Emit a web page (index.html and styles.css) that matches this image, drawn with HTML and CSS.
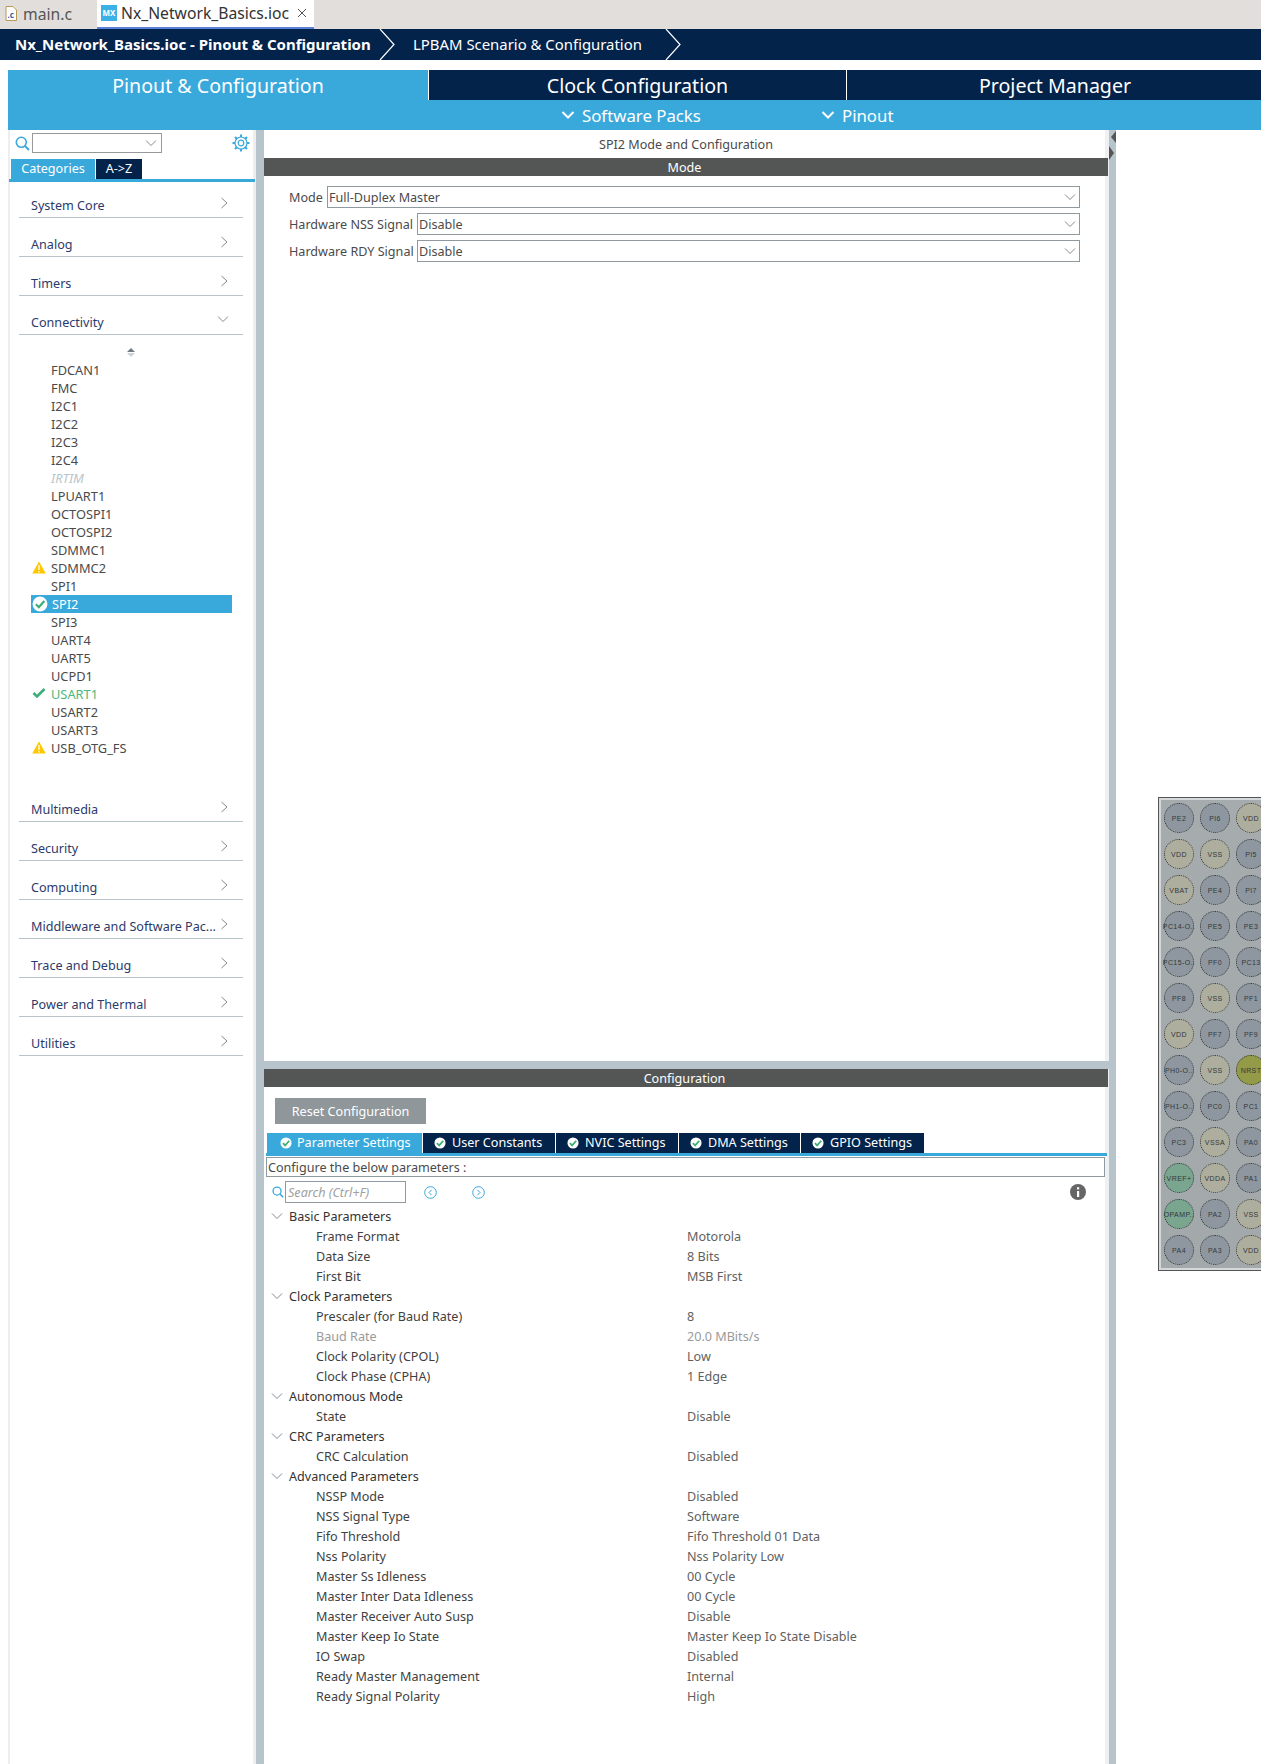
FILE: index.html
```html
<!DOCTYPE html>
<html lang="en">
<head>
    <meta charset="UTF-8">
    <title>Nx_Network_Basics.ioc - Pinout &amp; Configuration</title>
    <link rel="stylesheet" href="styles.css">
</head>
<body>
    <svg class="defs" width="0" height="0">
        <symbol id="chev-right" viewBox="0 0 8 12"><path d="M1.5 1 L7 6 L1.5 11" fill="none" stroke="#7f8a90" stroke-width="1"/></symbol>
        <symbol id="chev-down" viewBox="0 0 12 8"><path d="M1 1.5 L6 6.5 L11 1.5" fill="none" stroke="#7f8a90" stroke-width="1"/></symbol>
        <symbol id="chev-white" viewBox="0 0 14 10"><path d="M1.5 2 L7 7.5 L12.5 2" fill="none" stroke="#fff" stroke-width="2"/></symbol>
        <symbol id="search" viewBox="0 0 15 15"><circle cx="6.3" cy="6.3" r="5" fill="none" stroke="#39a9dc" stroke-width="1.6"/><path d="M10 10 L14 14" stroke="#39a9dc" stroke-width="2"/></symbol>
        <symbol id="tick" viewBox="0 0 14 14"><circle cx="7" cy="7" r="6.5" fill="#fff"/><path d="M3.4 7.2 L6 9.8 L10.8 4.4" fill="none" stroke="#3cae76" stroke-width="2"/></symbol>
        <symbol id="warn" viewBox="0 0 14 13"><path d="M7 0.5 L13.8 12.5 L0.2 12.5 Z" fill="#fdc800"/><path d="M7 4 V9 M7 10 V11.5" stroke="#fff" stroke-width="1.3"/></symbol>
    </svg>

    <div class="file-tabs">
        <div class="file-tab">
            <svg class="file-icon" width="12" height="15" viewBox="0 0 12 15"><path d="M1 .5 H8 L11.5 4 V14.5 H1 Z" fill="#fff" stroke="#b59a5a"/><text x="2.5" y="12" class="file-c">.c</text></svg>
            <span>main.c</span>
        </div>
        <div class="file-tab active">
            <span class="mx-icon">MX</span>
            <span>Nx_Network_Basics.ioc</span>
            <svg class="close-x" width="10" height="10" viewBox="0 0 10 10"><path d="M1 1 L9 9 M9 1 L1 9" stroke="#555" stroke-width="1"/></svg>
        </div>
    </div>

    <div class="crumbs">
        <span class="crumb-on">Nx_Network_Basics.ioc - Pinout &amp; Configuration</span>
        <svg class="crumb-arrow" width="17" height="31" viewBox="0 0 17 31"><path d="M1 0 L15 15.5 L1 31" fill="none" stroke="#fff" stroke-width="1.2"/></svg>
        <span class="crumb-off">LPBAM Scenario &amp; Configuration</span>
        <svg class="crumb-arrow" width="17" height="31" viewBox="0 0 17 31"><path d="M1 0 L15 15.5 L1 31" fill="none" stroke="#fff" stroke-width="1.2"/></svg>
    </div>

    <div class="main-tabs">
        <div class="main-tab active">Pinout &amp; Configuration</div>
        <div class="main-tab second">Clock Configuration</div>
        <div class="main-tab third">Project Manager</div>
    </div>
    <div class="sub-bar">
        <svg class="sub-chev" width="14" height="10"><use href="#chev-white"/></svg>
        <span class="sub-packs">Software Packs</span>
        <svg class="sub-chev" width="14" height="10"><use href="#chev-white"/></svg>
        <span>Pinout</span>
    </div>

    <div class="workspace">
        <aside class="side">
            <div class="side-search">
                <svg class="search-big" width="15" height="15"><use href="#search"/></svg>
                <div class="combo"><svg width="12" height="8"><use href="#chev-down"/></svg></div>
                <svg class="gear" width="18" height="18" viewBox="0 0 18 18">
                    <circle cx="9" cy="9" r="6" fill="none" stroke="#39a9dc" stroke-width="1.2"/>
                    <circle cx="9" cy="9" r="2.8" fill="none" stroke="#39a9dc" stroke-width="1.2"/>
                    <path d="M9 .5 V3 M9 15 V17.5 M.5 9 H3 M15 9 H17.5 M3 3 L4.8 4.8 M13.2 13.2 L15 15 M15 3 L13.2 4.8 M4.8 13.2 L3 15" stroke="#39a9dc" stroke-width="2"/>
                </svg>
            </div>
            <div class="side-tabs">
                <span class="side-tab active">Categories</span>
                <span class="side-tab">A-&gt;Z</span>
            </div>
            <div class="side-list">
                <div class="cat"><span>System Core</span><svg width="8" height="12"><use href="#chev-right"/></svg></div>
                <div class="cat"><span>Analog</span><svg width="8" height="12"><use href="#chev-right"/></svg></div>
                <div class="cat"><span>Timers</span><svg width="8" height="12"><use href="#chev-right"/></svg></div>
                <div class="cat open"><span>Connectivity</span><svg width="12" height="8"><use href="#chev-down"/></svg></div>
                <div class="sort"><span class="sort-up"></span><span class="sort-down"></span></div>
                <ul class="periph">
                    <li>FDCAN1</li>
                    <li>FMC</li>
                    <li>I2C1</li>
                    <li>I2C2</li>
                    <li>I2C3</li>
                    <li>I2C4</li>
                    <li class="off">IRTIM</li>
                    <li>LPUART1</li>
                    <li>OCTOSPI1</li>
                    <li>OCTOSPI2</li>
                    <li>SDMMC1</li>
                    <li><svg class="li-icon" width="14" height="13"><use href="#warn"/></svg>SDMMC2</li>
                    <li>SPI1</li>
                    <li class="selected"><svg class="li-icon" width="16" height="16"><use href="#tick"/></svg>SPI2</li>
                    <li>SPI3</li>
                    <li>UART4</li>
                    <li>UART5</li>
                    <li>UCPD1</li>
                    <li class="ok"><svg class="li-icon" width="14" height="12" viewBox="0 0 14 12"><path d="M1.5 6 L5 9.5 L12.5 2" fill="none" stroke="#3cae76" stroke-width="2.6"/></svg>USART1</li>
                    <li>USART2</li>
                    <li>USART3</li>
                    <li><svg class="li-icon" width="14" height="13"><use href="#warn"/></svg>USB_OTG_FS</li>
                </ul>
                <div class="cat"><span>Multimedia</span><svg width="8" height="12"><use href="#chev-right"/></svg></div>
                <div class="cat"><span>Security</span><svg width="8" height="12"><use href="#chev-right"/></svg></div>
                <div class="cat"><span>Computing</span><svg width="8" height="12"><use href="#chev-right"/></svg></div>
                <div class="cat"><span>Middleware and Software Pac...</span><svg width="8" height="12"><use href="#chev-right"/></svg></div>
                <div class="cat"><span>Trace and Debug</span><svg width="8" height="12"><use href="#chev-right"/></svg></div>
                <div class="cat"><span>Power and Thermal</span><svg width="8" height="12"><use href="#chev-right"/></svg></div>
                <div class="cat"><span>Utilities</span><svg width="8" height="12"><use href="#chev-right"/></svg></div>
            </div>
        </aside>

        <div class="split-v"></div>

        <main class="centre">
            <section class="mode">
                <div class="mode-title">SPI2 Mode and Configuration</div>
                <div class="bar">Mode</div>
                <div class="mode-form">
                    <div class="mode-row"><label>Mode</label><div class="select">Full-Duplex Master<svg width="12" height="8"><use href="#chev-down"/></svg></div></div>
                    <div class="mode-row"><label>Hardware NSS Signal</label><div class="select">Disable<svg width="12" height="8"><use href="#chev-down"/></svg></div></div>
                    <div class="mode-row"><label>Hardware RDY Signal</label><div class="select">Disable<svg width="12" height="8"><use href="#chev-down"/></svg></div></div>
                </div>
            </section>

            <div class="split-h"></div>

            <section class="config">
                <div class="bar">Configuration</div>
                <button class="reset">Reset Configuration</button>
                <div class="cfg-tabs">
                    <span class="cfg-tab active t1"><svg width="12" height="12"><use href="#tick"/></svg>Parameter Settings</span>
                    <span class="cfg-tab t2"><svg width="12" height="12"><use href="#tick"/></svg>User Constants</span>
                    <span class="cfg-tab t3"><svg width="12" height="12"><use href="#tick"/></svg>NVIC Settings</span>
                    <span class="cfg-tab t4"><svg width="12" height="12"><use href="#tick"/></svg>DMA Settings</span>
                    <span class="cfg-tab t5"><svg width="12" height="12"><use href="#tick"/></svg>GPIO Settings</span>
                </div>
                <div class="cfg-note">Configure the below parameters :</div>
                <div class="cfg-search">
                    <svg class="search-small" width="12" height="12"><use href="#search"/></svg>
                    <div class="search-box">Search (Ctrl+F)</div>
                    <svg class="nav-btn" width="13" height="13" viewBox="0 0 13 13"><circle cx="6.5" cy="6.5" r="5.8" fill="none" stroke="#39a9dc" stroke-width="1"/><path d="M7.6 3.8 L5 6.5 L7.6 9.2" fill="none" stroke="#39a9dc" stroke-width="1"/></svg>
                    <svg class="nav-btn next" width="13" height="13" viewBox="0 0 13 13"><circle cx="6.5" cy="6.5" r="5.8" fill="none" stroke="#39a9dc" stroke-width="1"/><path d="M5.4 3.8 L8 6.5 L5.4 9.2" fill="none" stroke="#39a9dc" stroke-width="1"/></svg>
                    <svg class="info" width="16" height="16" viewBox="0 0 16 16"><circle cx="8" cy="8" r="8" fill="#666"/><rect x="7" y="7" width="2.2" height="6" fill="#fff"/><rect x="7" y="3.2" width="2.2" height="2.2" fill="#fff"/></svg>
                </div>
                <div class="params">
                    <div class="group"><svg width="12" height="8"><use href="#chev-down"/></svg>Basic Parameters</div>
                    <div class="param"><span>Frame Format</span><span>Motorola</span></div>
                    <div class="param"><span>Data Size</span><span>8 Bits</span></div>
                    <div class="param"><span>First Bit</span><span>MSB First</span></div>
                    <div class="group"><svg width="12" height="8"><use href="#chev-down"/></svg>Clock Parameters</div>
                    <div class="param"><span>Prescaler (for Baud Rate)</span><span>8</span></div>
                    <div class="param muted"><span>Baud Rate</span><span>20.0 MBits/s</span></div>
                    <div class="param"><span>Clock Polarity (CPOL)</span><span>Low</span></div>
                    <div class="param"><span>Clock Phase (CPHA)</span><span>1 Edge</span></div>
                    <div class="group"><svg width="12" height="8"><use href="#chev-down"/></svg>Autonomous Mode</div>
                    <div class="param"><span>State</span><span>Disable</span></div>
                    <div class="group"><svg width="12" height="8"><use href="#chev-down"/></svg>CRC Parameters</div>
                    <div class="param"><span>CRC Calculation</span><span>Disabled</span></div>
                    <div class="group"><svg width="12" height="8"><use href="#chev-down"/></svg>Advanced Parameters</div>
                    <div class="param"><span>NSSP Mode</span><span>Disabled</span></div>
                    <div class="param"><span>NSS Signal Type</span><span>Software</span></div>
                    <div class="param"><span>Fifo Threshold</span><span>Fifo Threshold 01 Data</span></div>
                    <div class="param"><span>Nss Polarity</span><span>Nss Polarity Low</span></div>
                    <div class="param"><span>Master Ss Idleness</span><span>00 Cycle</span></div>
                    <div class="param"><span>Master Inter Data Idleness</span><span>00 Cycle</span></div>
                    <div class="param"><span>Master Receiver Auto Susp</span><span>Disable</span></div>
                    <div class="param"><span>Master Keep Io State</span><span>Master Keep Io State Disable</span></div>
                    <div class="param"><span>IO Swap</span><span>Disabled</span></div>
                    <div class="param"><span>Ready Master Management</span><span>Internal</span></div>
                    <div class="param"><span>Ready Signal Polarity</span><span>High</span></div>
                </div>
            </section>
        </main>

        <div class="split-r">
            <span class="arrow-left"></span>
            <span class="arrow-right"></span>
        </div>

        <div class="pinout">
            <div class="chip">
                <span class="pin">PE2</span><span class="pin">PI6</span><span class="pin pwr">VDD</span>
                <span class="pin pwr">VDD</span><span class="pin pwr">VSS</span><span class="pin">PI5</span>
                <span class="pin pwr">VBAT</span><span class="pin">PE4</span><span class="pin">PI7</span>
                <span class="pin">PC14-O..</span><span class="pin">PE5</span><span class="pin">PE3</span>
                <span class="pin">PC15-O..</span><span class="pin">PF0</span><span class="pin">PC13</span>
                <span class="pin">PF8</span><span class="pin pwr">VSS</span><span class="pin">PF1</span>
                <span class="pin pwr">VDD</span><span class="pin">PF7</span><span class="pin">PF9</span>
                <span class="pin">PH0-O..</span><span class="pin pwr">VSS</span><span class="pin rst">NRST</span>
                <span class="pin">PH1-O..</span><span class="pin">PC0</span><span class="pin">PC1</span>
                <span class="pin">PC3</span><span class="pin pwr">VSSA</span><span class="pin">PA0</span>
                <span class="pin used">VREF+</span><span class="pin pwr">VDDA</span><span class="pin">PA1</span>
                <span class="pin used">OPAMP..</span><span class="pin">PA2</span><span class="pin pwr">VSS</span>
                <span class="pin">PA4</span><span class="pin">PA3</span><span class="pin pwr">VDD</span>
            </div>
        </div>
    </div>
</body>
</html>
```

FILE: styles.css
```css
body {
    margin: 0;
    width: 1261px;
    height: 1764px;
    overflow: hidden;
    background: #fff;
    font-family: "Noto Sans", "Open Sans", sans-serif;
    font-size: 12.6px;
    color: #4a4a4a;
}

.defs {
    display: block;
    height: 0;
}

/* Editor file tabs */
.file-tabs {
    display: flex;
    height: 29px;
    background: #e2dedb;
    font-size: 15.7px;
}

.file-tab {
    display: flex;
    align-items: center;
    width: 97px;
    padding-left: 5px;
    padding-bottom: 2px;
    box-sizing: border-box;
    color: #555;
}

.file-icon {
    margin-right: 6px;
}

.file-c {
    font-size: 8px;
    font-weight: 700;
    fill: #2a5fa8;
}

.file-tab.active {
    width: 217px;
    padding-left: 4px;
    padding-bottom: 1px;
    background: #fff;
    color: #333;
    border-bottom: 2px solid #5b82d6;
}

.mx-icon {
    width: 16px;
    height: 16px;
    margin-right: 4px;
    background: #3cb1e6;
    color: #fff;
    font-size: 8px;
    font-weight: 700;
    line-height: 16px;
    text-align: center;
}

.close-x {
    margin-left: 8px;
}

/* Breadcrumb bar */
.crumbs {
    display: flex;
    align-items: center;
    height: 31px;
    margin-bottom: 10px;
    background: #03234b;
    color: #fff;
    font-size: 14.9px;
}

.crumb-on {
    width: 364px;
    padding-left: 15px;
    padding-bottom: 2px;
    font-size: 15px;
    font-weight: 700;
}

.crumb-off {
    width: 252px;
    padding-left: 17px;
    padding-bottom: 2px;
}

/* Perspective tabs */
.main-tabs {
    display: flex;
    height: 30px;
    margin-left: 8px;
    background: #03234b;
    color: #fff;
    font-size: 19.6px;
    line-height: 32px;
    text-align: center;
}

.main-tab {
    box-sizing: border-box;
}

.main-tab.active {
    width: 420px;
    background: #39a9dc;
}

.main-tab.second {
    width: 418px;
    border-left: 1px solid #fff;
}

.main-tab.third {
    width: 415px;
    padding-left: 2px;
    border-left: 1px solid #fff;
}

.sub-bar {
    display: flex;
    align-items: center;
    height: 30px;
    margin-left: 8px;
    padding-left: 553px;
    background: #39a9dc;
    color: #fff;
    font-size: 16.8px;
}

.sub-chev {
    margin-right: 7px;
}

.sub-packs {
    width: 239px;
}

/* Left panel */
.workspace {
    display: flex;
    height: 1634px;
}

.side {
    width: 243px;
    margin-left: 8px;
    padding: 0 3px 0 2px;
    background: #fff;
    box-shadow: inset 2px 0 0 #eee, inset -3px 0 0 #eee;
    flex-shrink: 0;
}

.side-search {
    display: flex;
    align-items: center;
    height: 29px;
    padding-left: 5px;
    padding-bottom: 3px;
    box-sizing: border-box;
}

.search-big {
    margin-right: 2px;
}

.combo {
    display: flex;
    align-items: center;
    justify-content: flex-end;
    width: 130px;
    height: 20px;
    padding-right: 4px;
    margin-right: 70px;
    box-sizing: border-box;
    border: 1px solid #999;
}

.side-tabs {
    display: flex;
    height: 20px;
    padding-left: 1px;
    border-bottom: 3px solid #39a9dc;
    margin: 0 -2px 0 -1px;
    line-height: 20px;
}

.side-tab {
    width: 46px;
    margin-left: 1px;
    background: #03234b;
    color: #fff;
    text-align: center;
}

.side-tab.active {
    width: 84px;
    background: #39a9dc;
}

.cat {
    display: flex;
    justify-content: space-between;
    width: 224px;
    height: 20px;
    margin: 19px 0 0 9px;
    padding: 0 15px 0 12px;
    box-sizing: border-box;
    border-bottom: 1px solid #b8c4cc;
    color: #2b3a6b;
    line-height: 15px;
    white-space: nowrap;
}

.cat:first-child {
    margin-top: 16px;
}

.cat svg {
    margin-top: -1px;
}

.cat.open svg {
    margin: 0 -1px 0 0;
}

.sort {
    display: flex;
    flex-direction: column;
    align-items: center;
    gap: 1px;
    width: 224px;
    height: 26px;
    padding-top: 13px;
    margin-left: 9px;
    box-sizing: border-box;
}

.sort-up {
    width: 0;
    border: 4px solid transparent;
    border-top: 0;
    border-bottom: 4px solid #707a80;
}

.sort-down {
    width: 0;
    border: 4px solid transparent;
    border-bottom: 0;
    border-top: 4px solid #ccd3d8;
}

.periph {
    list-style: none;
    margin: 0 0 45px;
    padding: 0 0 0 21px;
    font-size: 12.8px;
}

.periph li {
    position: relative;
    height: 18px;
    padding-left: 20px;
    line-height: 18px;
}

.li-icon {
    position: absolute;
    left: 1px;
    top: 2px;
}

.periph .off {
    color: #b8c4cc;
    font-style: italic;
}

.periph .ok {
    color: #4db87a;
}

.periph .selected {
    width: 201px;
    padding-left: 21px;
    box-sizing: border-box;
    background: #39a9dc;
    color: #fff;
}

.periph .selected .li-icon {
    left: 1px;
    top: 1px;
}

.split-v {
    width: 8px;
    background: #b8c4cc;
    flex-shrink: 0;
}

/* Centre panel */
.centre {
    display: flex;
    flex-direction: column;
    width: 845px;
    flex-shrink: 0;
    box-shadow: inset -4px 0 0 #eef0f1;
}

.mode {
    height: 931px;
}

.mode-title {
    height: 28px;
    padding-right: 1px;
    line-height: 30px;
    text-align: center;
}

.bar {
    width: 844px;
    height: 18px;
    padding-right: 3px;
    box-sizing: border-box;
    background: #545655;
    color: #fff;
    line-height: 20px;
    text-align: center;
}

.mode-form {
    padding: 10px 0 0 25px;
}

.mode-row {
    display: flex;
    align-items: center;
    width: 791px;
    height: 22px;
    margin-bottom: 5px;
}

.mode-row label {
    white-space: nowrap;
}

.select {
    display: flex;
    flex: 0 0 auto;
    justify-content: space-between;
    align-items: center;
    width: 663px;
    height: 22px;
    margin-left: auto;
    padding: 0 3px 0 1px;
    box-sizing: border-box;
    border: 1px solid #8f9aa0;
}

.mode-row:first-child .select {
    width: 753px;
}

.split-h {
    height: 8px;
    background: #b8c4cc;
}

.reset {
    display: block;
    width: 151px;
    height: 26px;
    margin: 11px 0 9px 11px;
    border: none;
    background: #8f979b;
    color: #fff;
    font-family: inherit;
    font-size: 12.6px;
}

.cfg-tabs {
    display: flex;
    height: 20px;
    margin: 0 2px 0 2px;
    padding-left: 1px;
    border-bottom: 3px solid #39a9dc;
    line-height: 20px;
}

.cfg-tab {
    display: flex;
    align-items: center;
    gap: 6px;
    padding-left: 11px;
    margin-right: 1px;
    box-sizing: border-box;
    background: #03234b;
    color: #fff;
}

.cfg-tab.active { background: #39a9dc; }
.cfg-tab.t1 { width: 155px; padding-left: 13px; gap: 5px; }
.cfg-tab.t2 { width: 132px; }
.cfg-tab.t3 { width: 122px; }
.cfg-tab.t4 { width: 121px; }
.cfg-tab.t5 { width: 123px; margin-right: 0; }

.cfg-note {
    width: 839px;
    height: 20px;
    margin: 1px 0 4px 2px;
    padding-left: 1px;
    box-sizing: border-box;
    border: 1px solid #8f9aa0;
    line-height: 20px;
}

.cfg-search {
    display: flex;
    align-items: center;
    height: 22px;
    padding-left: 8px;
}

.search-small {
    margin-right: 1px;
}

.search-box {
    width: 121px;
    height: 22px;
    padding-left: 2px;
    box-sizing: border-box;
    border: 1px solid #8f9aa0;
    color: #a0a0a0;
    font-style: italic;
    line-height: 22px;
}

.nav-btn {
    margin-left: 18px;
}

.nav-btn.next {
    margin-left: 35px;
}

.info {
    margin-left: 585px;
}

.params {
    padding-top: 3px;
}

.group {
    display: flex;
    align-items: center;
    gap: 6px;
    height: 20px;
    padding-left: 7px;
    color: #333;
}

.param {
    display: flex;
    height: 20px;
    padding-left: 52px;
    line-height: 22px;
    color: #5f5f5f;
}

.param span:first-child {
    width: 371px;
    color: #3f3f3f;
}

.param.muted,
.param.muted span:first-child {
    color: #9a9a9a;
}

.split-r {
    display: flex;
    flex-direction: column;
    width: 7px;
    background: #b8c4cc;
    flex-shrink: 0;
}

.arrow-left {
    width: 0;
    margin: 1px 0 0 2px;
    border: 6px solid transparent;
    border-left: 0;
    border-right: 5px solid #555;
}

.arrow-right {
    width: 0;
    margin-top: 3px;
    border: 7px solid transparent;
    border-right: 0;
    border-left: 5px solid #555;
}

/* Chip view */
.pinout {
    flex: 1;
    min-width: 0;
    overflow: hidden;
    padding: 667px 0 0 42px;
}

.chip {
    display: grid;
    grid-template-columns: repeat(3, 30px);
    grid-auto-rows: 30px;
    gap: 6px;
    width: 160px;
    height: 474px;
    padding: 5px 0 0 5px;
    box-sizing: border-box;
    border: 1px solid #555;
    background: linear-gradient(#a6abae, #a3a8ab);
    box-shadow: inset 2px 2px 0 #d5d8da, inset 0 -2px 0 #d5d8da;
}

.pin {
    display: flex;
    align-items: center;
    justify-content: center;
    box-sizing: border-box;
    border: 1px dotted #333;
    border-radius: 50%;
    background: #8e979f;
    color: #33383c;
    font-family: "Liberation Sans", sans-serif;
    font-size: 7px;
    letter-spacing: 0.4px;
    white-space: nowrap;
}

.pin.pwr { background: #aeae9e; }
.pin.rst { background: #939a48; }
.pin.used { background: #7aa58f; }
```
